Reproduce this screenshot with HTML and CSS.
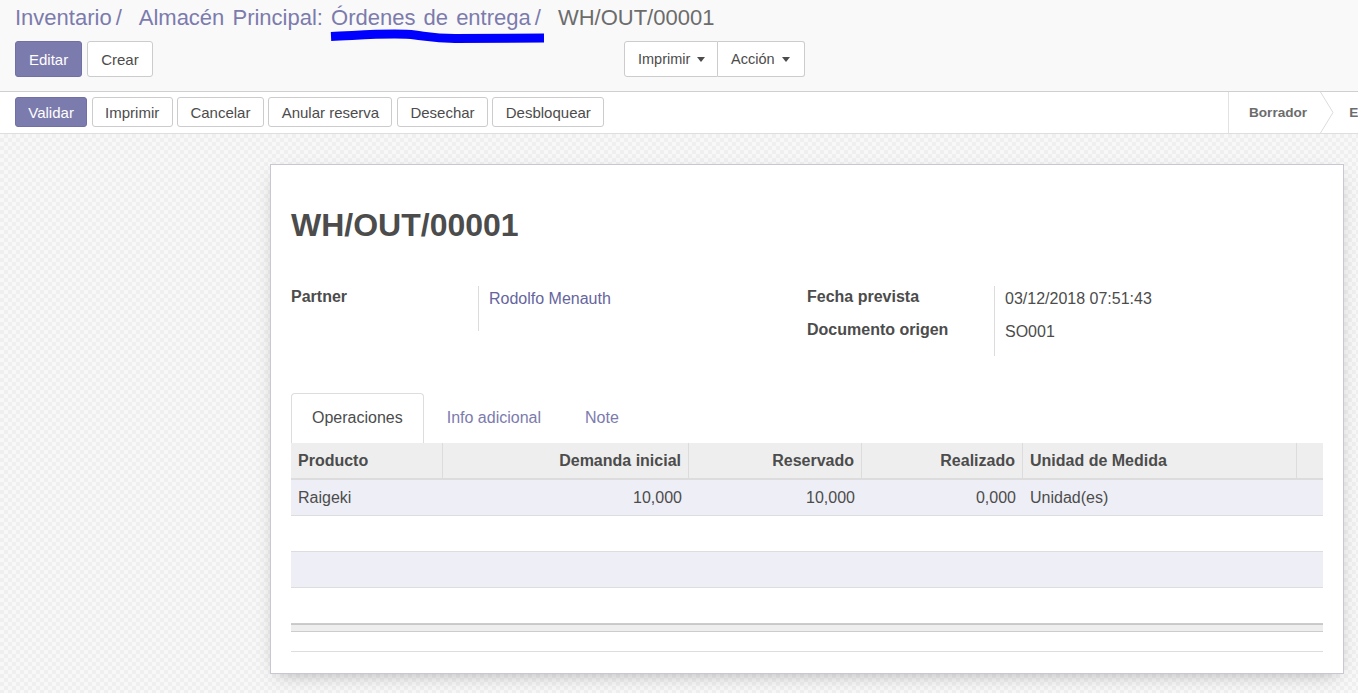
FILE: index.html
```html
<!DOCTYPE html>
<html lang="es">
<head>
<meta charset="utf-8">
<title>WH/OUT/00001</title>
<link rel="stylesheet" href="styles.css">
</head>
<body>
<div class="cp">
  <ol class="breadcrumb">
    <li><a class="bc-link">Inventario</a></li>
    <li class="bc-sep">/</li>
    <li><a class="bc-link bc-wide">Almacén Principal: Órdenes de entrega</a></li>
    <li class="bc-sep">/</li>
    <li class="bc-active">WH/OUT/00001</li>
  </ol>
  <svg class="scribble" width="230" height="26" viewBox="0 0 230 26" aria-hidden="true">
    <path d="M6 11.5 C 40 10, 70 7.5, 90 10 C 105 12, 110 13.5, 130 13.5 L 219 13" fill="none" stroke="#0000ff" stroke-width="9"/>
  </svg>
  <div class="cp-row">
    <div class="cp-buttons">
      <button class="btn btn-primary">Editar</button>
      <button class="btn">Crear</button>
    </div>
    <div class="btn-group">
      <button class="btn btn-dd">Imprimir <span class="caret"></span></button>
      <button class="btn btn-dd">Acción <span class="caret"></span></button>
    </div>
  </div>
</div>

<div class="statusbar">
  <div class="sb-buttons">
    <button class="btn btn-sm btn-primary">Validar</button>
    <button class="btn btn-sm">Imprimir</button>
    <button class="btn btn-sm">Cancelar</button>
    <button class="btn btn-sm">Anular reserva</button>
    <button class="btn btn-sm">Desechar</button>
    <button class="btn btn-sm">Desbloquear</button>
  </div>
  <div class="sb-status">
    <span class="st-item">Borrador</span>
    <svg class="chev" width="14" height="41" viewBox="0 0 14 41" aria-hidden="true"><polyline points="0.5,0 13,20.5 0.5,41" fill="none" stroke="#dcdcdc" stroke-width="1"/></svg>
    <span class="st-item st-next">En espera</span>
  </div>
</div>

<div class="sheet-bg">
  <div class="sheet">
    <h1 class="title">WH/OUT/00001</h1>
    <div class="groups">
      <div class="group">
        <div class="frow frow-tall">
          <div class="lbl">Partner</div>
          <div class="val val-link">Rodolfo Menauth</div>
        </div>
      </div>
      <div class="group">
        <div class="frow">
          <div class="lbl">Fecha prevista</div>
          <div class="val">03/12/2018 07:51:43</div>
        </div>
        <div class="frow frow-last">
          <div class="lbl">Documento origen</div>
          <div class="val">SO001</div>
        </div>
      </div>
    </div>

    <ul class="tabs">
      <li class="tab tab-active">Operaciones</li>
      <li class="tab">Info adicional</li>
      <li class="tab">Note</li>
    </ul>

    <table class="list">
      <colgroup>
        <col class="c1"><col class="c2"><col class="c3"><col class="c4"><col class="c5"><col class="c6">
      </colgroup>
      <thead>
        <tr>
          <th>Producto</th>
          <th class="num">Demanda inicial</th>
          <th class="num">Reservado</th>
          <th class="num">Realizado</th>
          <th>Unidad de Medida</th>
          <th class="th-last"></th>
        </tr>
      </thead>
      <tbody>
        <tr class="odd">
          <td>Raigeki</td>
          <td class="num">10,000</td>
          <td class="num">10,000</td>
          <td class="num">0,000</td>
          <td>Unidad(es)</td>
          <td></td>
        </tr>
        <tr><td></td><td></td><td></td><td></td><td></td><td></td></tr>
        <tr class="odd"><td></td><td></td><td></td><td></td><td></td><td></td></tr>
        <tr><td></td><td></td><td></td><td></td><td></td><td></td></tr>
      </tbody>
      <tfoot>
        <tr><td></td><td></td><td></td><td></td><td></td><td></td></tr>
      </tfoot>
    </table>
    <div class="after"></div>
  </div>
</div>
</body>
</html>
```

FILE: styles.css
```css
* { box-sizing: border-box; }
html, body { margin: 0; padding: 0; }
body {
  font-family: "Liberation Sans", Arial, sans-serif;
  color: #4c4c4c;
  font-size: 15px;
  overflow: hidden;
  width: 1358px;
  height: 693px;
  background: #f4f4f4;
}

/* control panel */
.cp {
  position: relative;
  background: #f9f9f9;
  padding: 5px 15px 14px;
  border-bottom: 1px solid #cfcfcf;
}
.breadcrumb {
  list-style: none;
  margin: 0;
  padding: 0;
  display: flex;
  font-size: 22px;
  line-height: 26px;
  white-space: nowrap;
}
.bc-link { color: #7c7bad; }
.bc-wide { word-spacing: 2px; }
.bc-sep { color: #7c7bad; padding: 0 17px 0 4px; }
.bc-active { color: #6c6c6c; }
.scribble { position: absolute; left: 325px; top: 25px; }

.cp-row { display: flex; margin-top: 10px; height: 36px; }
.cp-buttons { display: flex; gap: 5px; flex: 0 0 609px; }
.btn-group { display: flex; }

.btn {
  font-family: inherit;
  font-size: 15px;
  color: #4c4c4c;
  background: #fff;
  border: 1px solid #cccccc;
  border-radius: 3px;
  padding: 0 13px;
  height: 36px;
  cursor: pointer;
  white-space: nowrap;
}
.btn-primary {
  background: #7c7bad;
  border-color: #7170a6;
  color: #fff;
}
.btn-group .btn { border-radius: 0; font-size: 14.5px; padding: 0 13px; }
.btn-group .btn:first-child { border-radius: 3px 0 0 3px; width: 94px; text-align: left; }
.btn-group .btn:last-child { border-radius: 0 3px 3px 0; border-left: none; width: 87px; text-align: left; }
.caret {
  display: inline-block;
  width: 0; height: 0;
  border-left: 4.5px solid transparent;
  border-right: 4.5px solid transparent;
  border-top: 5px solid #4c4c4c;
  vertical-align: middle;
  margin-left: 3px;
  margin-top: -2px;
}

/* statusbar */
.statusbar {
  display: flex;
  background: #fff;
  border-bottom: 1px solid #dedede;
  height: 42px;
  overflow: hidden;
  white-space: nowrap;
}
.sb-buttons {
  flex: 0 0 1228px;
  display: flex;
  gap: 4.6px;
  padding: 5px 0 0 15px;
}
.btn-sm { height: 30px; padding: 0 12.3px; font-size: 15px; }
.sb-status {
  flex: 0 0 auto;
  display: flex;
  align-items: center;
  border-left: 1px solid #e2e2e2;
  height: 41px;
}
.st-item {
  font-size: 13.6px;
  font-weight: bold;
  color: #6c6c6c;
  padding: 0 13px 0 20px;
}
.st-next { padding-left: 15px; }
.chev { display: block; flex: 0 0 14px; }

/* sheet */
.sheet-bg {
  height: 559px;
  padding-top: 30px;
  background-color: #f4f4f4;
  background-image: repeating-conic-gradient(#efefef 0 25%, #f8f8f8 0 50%);
  background-size: 8px 8px;
}
.sheet {
  margin-left: 270px;
  width: 1074px;
  background: #fff;
  border: 1px solid #c8c8d3;
  box-shadow: 0 6px 18px -8px rgba(0, 0, 0, 0.35);
  padding: 41px 20px 21px;
}
.title {
  margin: 0;
  font-size: 32px;
  line-height: 38px;
  font-weight: bold;
  color: #4c4c4c;
}

.groups {
  display: grid;
  grid-template-columns: 1fr 1fr;
  margin-top: 42px;
  font-size: 16px;
}
.frow {
  display: grid;
  grid-template-columns: 188px 1fr;
  height: 33px;
}
.frow-tall { height: 45px; }
.frow-last { height: 37px; }
.lbl {
  font-weight: bold;
  line-height: 20px;
  padding-top: 1px;
  border-right: 1px solid #dcdcdc;
  color: #4c4c4c;
}
.val {
  line-height: 20px;
  padding: 3px 0 0 10px;
  color: #4c4c4c;
}
.val-link { color: #66659d; }

/* tabs */
.tabs {
  list-style: none;
  margin: 37px 0 0;
  padding: 0;
  display: flex;
  font-size: 16px;
}
.tab {
  padding: 14px 20px 15px;
  line-height: 20px;
  border: 1px solid transparent;
  border-bottom: none;
  border-radius: 4px 4px 0 0;
  margin-right: 2px;
  color: #7c7bad;
}
.tab-active {
  border-color: #dddddd;
  color: #4c4c4c;
  background: #fff;
}

/* list */
.list {
  width: 100%;
  table-layout: fixed;
  border-collapse: separate;
  border-spacing: 0;
  font-size: 16px;
}
.c1 { width: 152px; }
.c2 { width: 246px; }
.c3 { width: 173px; }
.c4 { width: 161px; }
.c5 { width: 274px; }
.c6 { width: 26px; }
.list th {
  background: #eeeeee;
  font-weight: bold;
  text-align: left;
  padding: 0 7px;
  height: 37px;
  line-height: 35px;
  border-right: 1px solid #dcdcdc;
  border-bottom: 2px solid #dcdcdc;
  color: #4c4c4c;
  white-space: nowrap;
}
.list th.th-last { border-right: none; }
.list .num { text-align: right; }
.list td {
  padding: 0 7px;
  height: 36px;
  line-height: 35px;
  border-bottom: 1px solid #dddddd;
  color: #4c4c4c;
  white-space: nowrap;
}
.list tr.odd td { background: #eeeef6; }
.list tbody tr:last-child td { border-bottom: 1px solid #cccccc; }
.list tfoot td {
  height: 8px;
  line-height: 6px;
  padding: 0;
  background: #eeeeee;
  border-top: 1px solid #c8c8c8;
  border-bottom: 1px solid #cccccc;
}
.after {
  height: 20px;
  border-bottom: 1px solid #dddddd;
}
```
